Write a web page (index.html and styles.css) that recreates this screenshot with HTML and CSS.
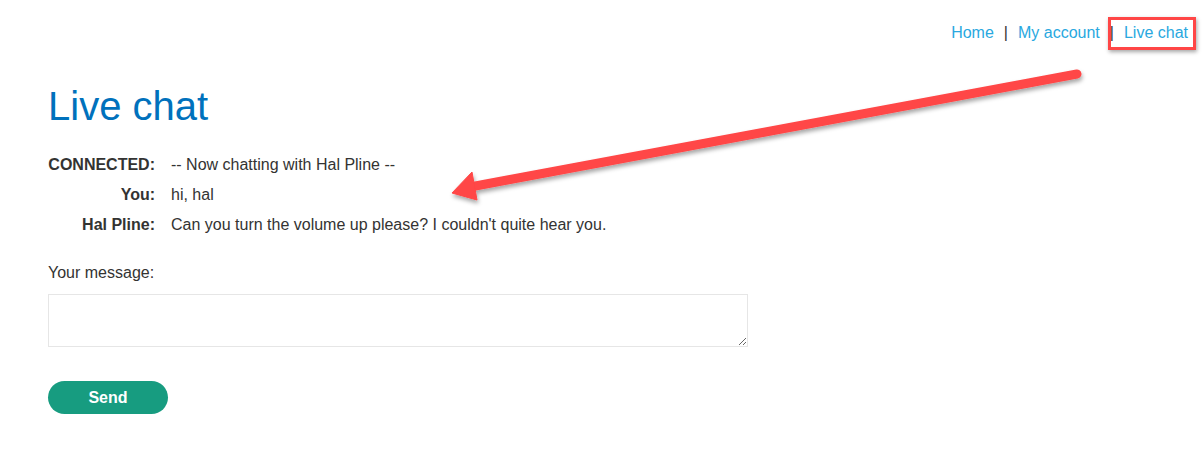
FILE: index.html
```html
<!DOCTYPE html>
<html lang="en">
<head>
<meta charset="utf-8">
<title>Live chat</title>
<link rel="stylesheet" href="styles.css">
</head>
<body>
<header class="top-nav">
  <a class="nav-link" href="#">Home</a>
  <span class="nav-sep">|</span>
  <a class="nav-link" href="#">My account</a>
  <span class="nav-sep">|</span>
  <a class="nav-link nav-current" href="#">Live chat</a>
</header>
<main class="container">
  <h1 class="page-title">Live chat</h1>
  <div class="chat-table">
    <div class="chat-label">CONNECTED:</div>
    <div class="chat-text">-- Now chatting with Hal Pline --</div>
    <div class="chat-label">You:</div>
    <div class="chat-text">hi, hal</div>
    <div class="chat-label">Hal Pline:</div>
    <div class="chat-text">Can you turn the volume up please? I couldn't quite hear you.</div>
  </div>
  <form class="chat-form">
    <label class="msg-label" for="msg">Your message:</label>
    <textarea id="msg" class="msg-input"></textarea>
    <button type="button" class="send-btn">Send</button>
  </form>
</main>
<svg class="annotation" width="1203" height="464" viewBox="0 0 1203 464">
  <defs>
    <filter id="shadow" x="-10%" y="-50%" width="120%" height="200%">
      <feDropShadow dx="1" dy="3" stdDeviation="2" flood-color="#000" flood-opacity="0.35"/>
    </filter>
  </defs>
  <g filter="url(#shadow)" fill="#ff4646" stroke="#ff4646">
    <line x1="1077" y1="74" x2="470" y2="187" stroke-width="9" stroke-linecap="round"/>
    <polygon points="452,193 472,172 477,200" stroke-width="1" stroke-linejoin="round"/>
  </g>
</svg>
</body>
</html>
```
FILE: styles.css
```css
html, body {
  margin: 0;
  padding: 0;
  background: #ffffff;
}

body {
  font-family: "Liberation Sans", Arial, sans-serif;
  font-size: 16px;
  color: #333332;
  position: relative;
  width: 1203px;
  height: 464px;
  overflow: hidden;
}

.top-nav {
  display: flex;
  justify-content: flex-end;
  align-items: center;
  padding: 23px 15px 0 0;
  line-height: 20px;
  height: 20px;
}

.nav-link {
  color: #29a8e0;
  text-decoration: none;
}

.nav-sep {
  color: #333332;
  margin: 0 10px;
}

.nav-current {
  position: relative;
}

.nav-current::after {
  content: "";
  position: absolute;
  left: -16px;
  right: -8px;
  top: -6px;
  bottom: -7px;
  border: 3px solid #ff4646;
  box-shadow: 1px 2px 4px rgba(0, 0, 0, 0.35);
}

.container {
  padding: 0 0 0 48px;
}

.page-title {
  margin: 40px 0 0 0;
  font-size: 40px;
  font-weight: normal;
  line-height: 46px;
  color: #0071bc;
}

.chat-table {
  margin-top: 21px;
  display: grid;
  grid-template-columns: 107px auto;
  column-gap: 16px;
  grid-auto-rows: 30px;
  line-height: 30px;
}

.chat-label {
  text-align: right;
  font-weight: bold;
}

.chat-form {
  display: flex;
  flex-direction: column;
  align-items: flex-start;
  margin-top: 23px;
}

.msg-label {
  line-height: 20px;
}

.msg-input {
  margin-top: 11px;
  width: 700px;
  height: 53px;
  box-sizing: border-box;
  border: 1px solid #e6e6e6;
  padding: 4px;
  font-family: inherit;
  font-size: 16px;
  resize: vertical;
}

.send-btn {
  margin-top: 34px;
  width: 120px;
  height: 33px;
  border: none;
  border-radius: 20px;
  background: #179c80;
  color: #ffffff;
  font-family: "Liberation Sans", Arial, sans-serif;
  font-size: 16px;
  font-weight: bold;
  padding: 0;
}

.annotation {
  position: absolute;
  left: 0;
  top: 0;
  pointer-events: none;
}
```
